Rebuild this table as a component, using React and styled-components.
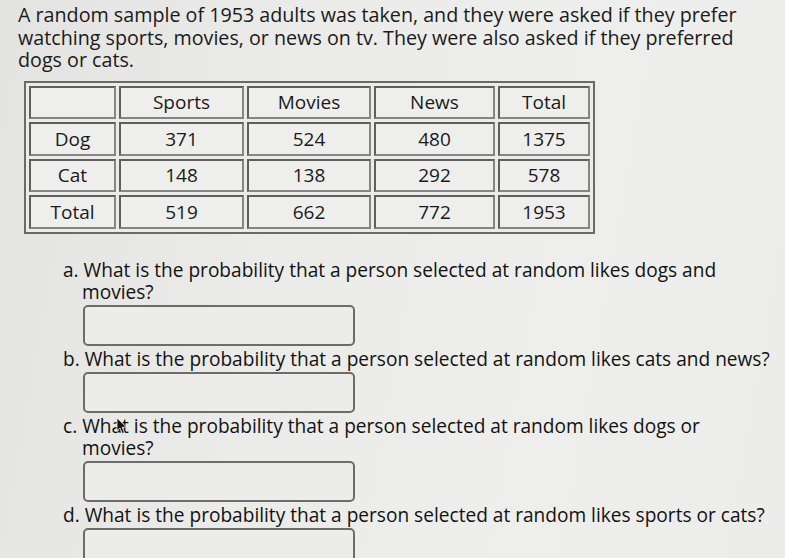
import React from "react";
import styled, { createGlobalStyle } from "styled-components";

const Global = createGlobalStyle`
  html, body { margin: 0; padding: 0; }
  body {
    width: 785px;
    height: 558px;
    overflow: hidden;
    background: linear-gradient(100deg, #e3e3e1 0%, #ebebe9 35%, #eeeeec 70%, #ececea 100%);
    font-family: "Open Sans", "DejaVu Sans", sans-serif;
    color: #1a1a1a;
  }
`;

const Page = styled.div`
  position: relative;
  padding: 4px 0 0 18px;
`;

const Intro = styled.p`
  margin: 0;
  width: 740px;
  font-size: 19.7px;
  line-height: 22.5px;
`;

const Table = styled.table`
  margin: 9px 0 0 6px;
  border: 2px solid #6a6a6a;
  border-spacing: 3px;
  background: #ebebea;
`;

const Cell = styled.td`
  box-sizing: border-box;
  width: ${(p) => p.$w}px;
  height: 33.5px;
  padding: 0;
  border: 2px solid #5e5e5e;
  border-right-color: #858585;
  border-bottom-color: #858585;
  background: #eeeeed;
  text-align: center;
  font-size: 19px;
  color: #1a1a1a;
`;

const Questions = styled.div`
  margin: 25px 0 0 45px;
  width: 712px;
`;

const Question = styled.p`
  margin: ${(p) => (p.$first ? 0 : 2)}px 0 0;
  padding-left: 19px;
  text-indent: -19px;
  font-size: 19.1px;
  line-height: 22px;
  color: #121212;
`;

const Answer = styled.div`
  box-sizing: border-box;
  width: 272px;
  height: 41px;
  margin: 2px 0 0 20px;
  border: 2px solid #6c6c6c;
  border-radius: 5px;
  background: #ececeb;
`;

const Cursor = styled.svg`
  position: absolute;
  left: 116px;
  top: 417px;
`;

const widths = [87, 125, 124, 121, 92];
const rows = [
  ["", "Sports", "Movies", "News", "Total"],
  ["Dog", "371", "524", "480", "1375"],
  ["Cat", "148", "138", "292", "578"],
  ["Total", "519", "662", "772", "1953"],
];

const qs = [
  { l: "a.", t: "What is the probability that a person selected at random likes dogs and movies?" },
  { l: "b.", t: "What is the probability that a person selected at random likes cats and news?" },
  { l: "c.", t: "What is the probability that a person selected at random likes dogs or movies?" },
  { l: "d.", t: "What is the probability that a person selected at random likes sports or cats?" },
];

export default function App() {
  return (
    <>
      <Global />
      <Page>
        <Intro>
          A random sample of 1953 adults was taken, and they were asked if they prefer watching
          sports, movies, or news on tv. They were also asked if they preferred dogs or cats.
        </Intro>
        <Table>
          <tbody>
            {rows.map((r, i) => (
              <tr key={i}>
                {r.map((c, j) => (
                  <Cell key={j} $w={widths[j]}>
                    {c}
                  </Cell>
                ))}
              </tr>
            ))}
          </tbody>
        </Table>
        <Questions>
          {qs.map((q, i) => (
            <React.Fragment key={q.l}>
              <Question $first={i === 0}>
                {q.l} {q.t}
              </Question>
              <Answer />
            </React.Fragment>
          ))}
        </Questions>
        <Cursor width="12" height="18" viewBox="0 0 12 18">
          <path d="M1 1 L1 14 L4 11 L6.3 16.5 L8.4 15.6 L6.2 10.2 L10.5 10.2 Z" fill="#111" stroke="#eee" strokeWidth="0.8" />
        </Cursor>
      </Page>
    </>
  );
}
